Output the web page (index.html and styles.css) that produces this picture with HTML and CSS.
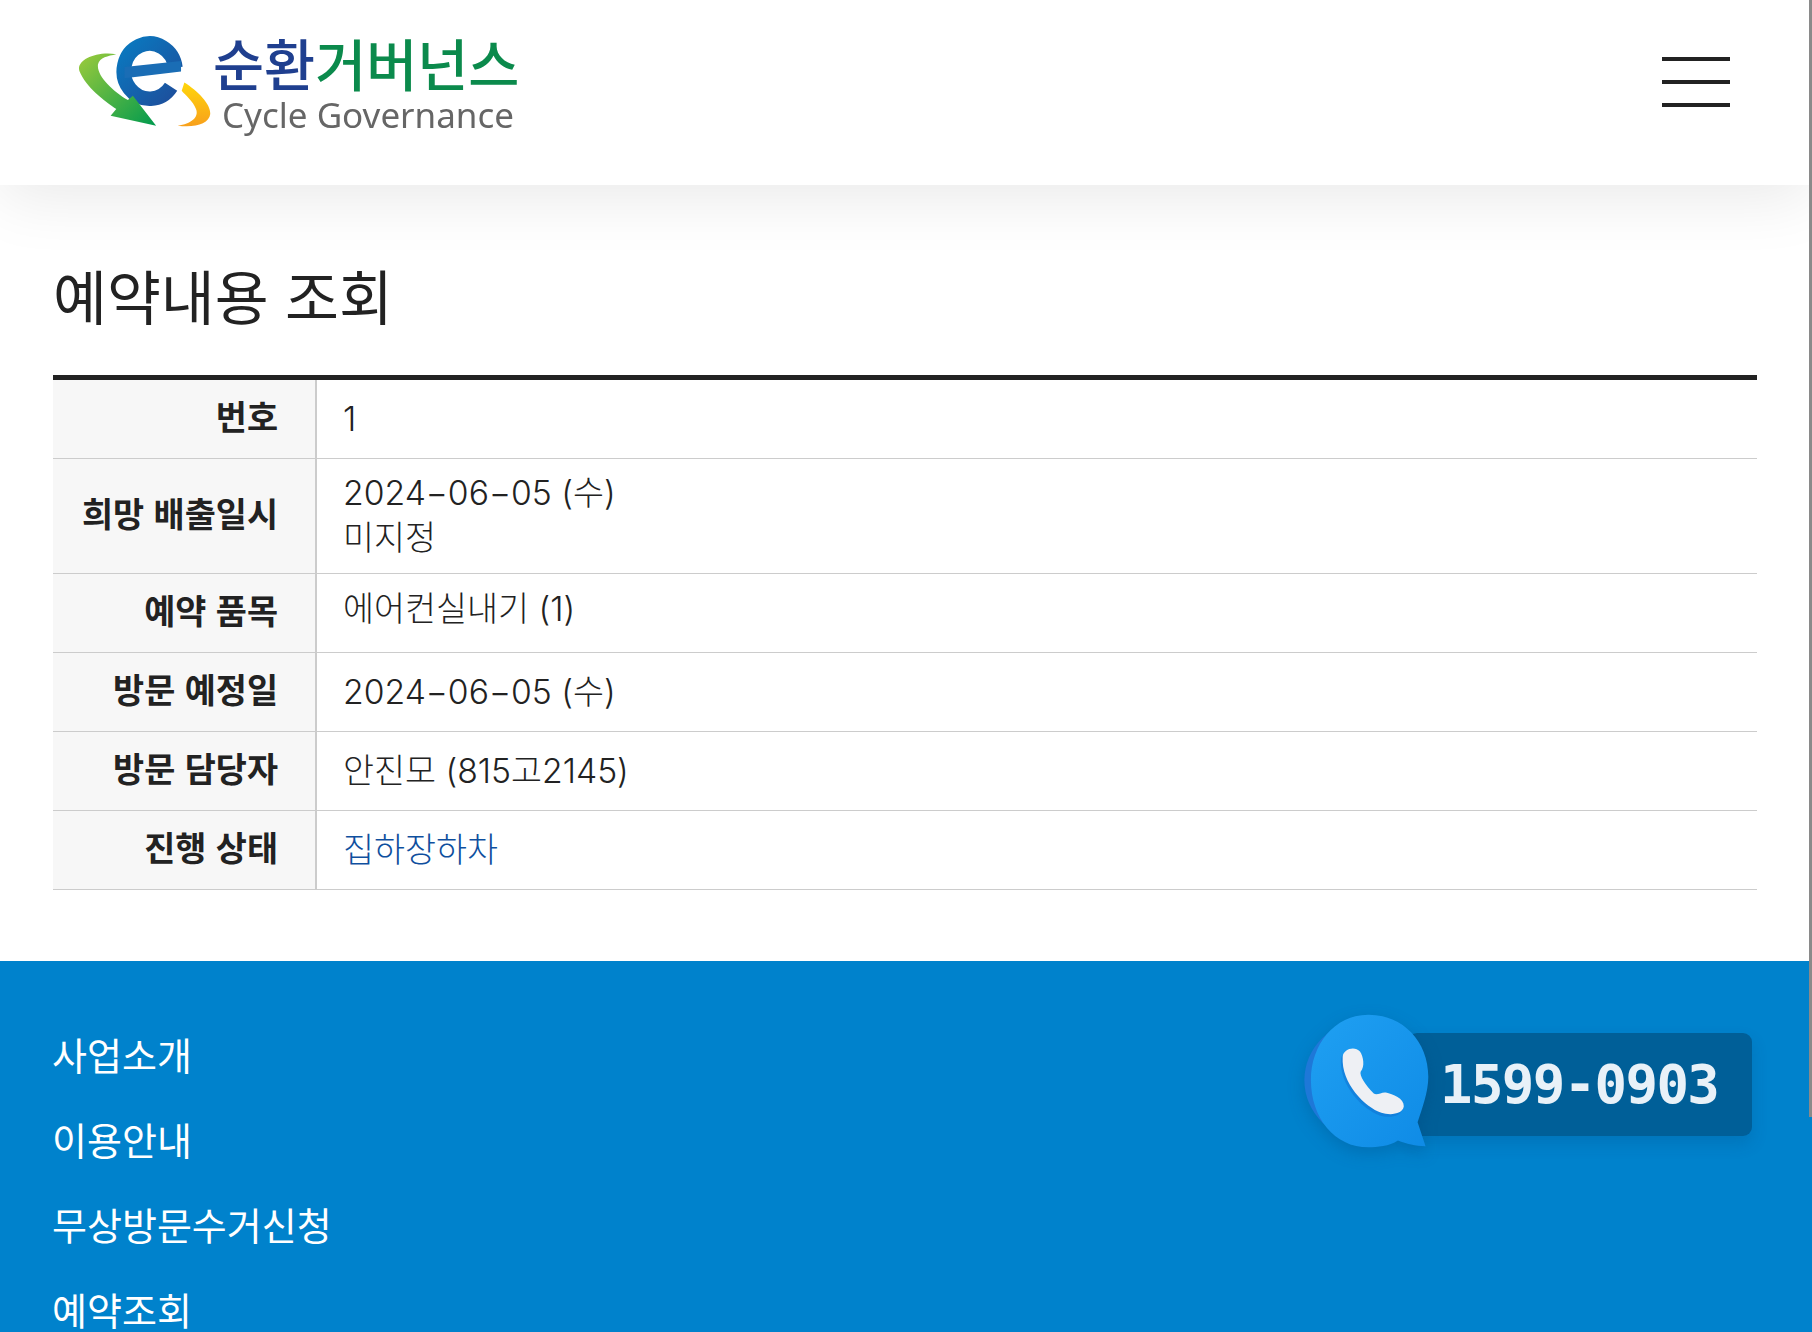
FILE: index.html
```html
<!DOCTYPE html>
<html lang="ko">
<head>
    <meta charset="UTF-8">
    <meta name="viewport" content="width=device-width, initial-scale=1.0">
    <title>예약내용 조회</title>
    <link rel="stylesheet" href="styles.css">
</head>
<body>
    <header class="site-header">
        <a class="logo" href="#">
            <svg class="logo-mark" viewBox="110 105 400 280" aria-hidden="true">
                <defs>
                    <linearGradient id="eBlue" x1="0" y1="0" x2="1" y2="1">
                        <stop offset="0" stop-color="#0a78bf"/>
                        <stop offset="1" stop-color="#1d4f9c"/>
                    </linearGradient>
                    <linearGradient id="arrowGreen" x1="0" y1="0" x2="1" y2="1">
                        <stop offset="0" stop-color="#9ccb3b"/>
                        <stop offset="1" stop-color="#009a4e"/>
                    </linearGradient>
                    <linearGradient id="arrowYellow" x1="0" y1="0" x2="0" y2="1">
                        <stop offset="0" stop-color="#ffd60a"/>
                        <stop offset="1" stop-color="#f8a01c"/>
                    </linearGradient>
                </defs>
                <path d="M390 258 A78 83 0 1 1 403 200" fill="none" stroke="url(#eBlue)" stroke-width="44"/>
                <path d="M250 198 L420 180 L420 212 L250 232 Z" fill="#1a6db5"/>
                <path d="M225 160 C160 150 104 180 114 210 C134 260 190 300 225 325 L208 345 L345 375 L275 285 L260 298 C215 270 165 225 170 190 C175 170 200 165 225 160 Z" fill="url(#arrowGreen)"/>
                <path d="M430 245 C470 270 510 310 508 340 C505 370 460 382 410 375 C450 370 475 350 465 325 C455 300 435 285 422 270 Z" fill="url(#arrowYellow)"/>
            </svg>
            <span class="logo-text">
                <span class="logo-ko"><span class="logo-navy">순환</span>거버넌스</span>
                <span class="logo-en">Cycle Governance</span>
            </span>
        </a>
        <button class="menu-btn" aria-label="menu">
            <span></span>
            <span></span>
            <span></span>
        </button>
    </header>

    <main class="content">
        <h1 class="page-title">예약내용 조회</h1>
        <table class="detail-table">
            <tr>
                <th>번호</th>
                <td>1</td>
            </tr>
            <tr>
                <th>희망 배출일시</th>
                <td>2024−06−05 (수)<br>미지정</td>
            </tr>
            <tr class="item-row">
                <th>예약 품목</th>
                <td>에어컨실내기 (1)</td>
            </tr>
            <tr>
                <th>방문 예정일</th>
                <td>2024−06−05 (수)</td>
            </tr>
            <tr>
                <th>방문 담당자</th>
                <td>안진모 (815고2145)</td>
            </tr>
            <tr>
                <th>진행 상태</th>
                <td class="status">집하장하차</td>
            </tr>
        </table>
    </main>

    <footer class="site-footer">
        <ul class="footer-menu">
            <li><a href="#">사업소개</a></li>
            <li><a href="#">이용안내</a></li>
            <li><a href="#">무상방문수거신청</a></li>
            <li><a href="#">예약조회</a></li>
        </ul>
        <div class="call-box">
            <svg class="call-icon" viewBox="95 65 365 405" preserveAspectRatio="none" aria-hidden="true">
                <defs>
                    <linearGradient id="bubble" x1="0" y1="0" x2="1" y2="1">
                        <stop offset="0" stop-color="#1fa0f2"/>
                        <stop offset="1" stop-color="#0f8be6"/>
                    </linearGradient>
                </defs>
                <circle cx="277" cy="265" r="178" fill="#1e78d8"/>
                <path d="M285 70 C385 70 458 150 458 255 C458 300 440 350 427 390 L450 462 C420 462 395 455 370 445 C345 462 310 465 285 465 C185 465 118 375 118 265 C118 160 185 70 285 70 Z" fill="url(#bubble)"/>
                <path d="M210 195 C212 172 245 162 260 180 C270 195 275 225 262 240 C258 250 275 280 300 305 C310 312 322 300 335 302 C355 306 388 320 387 343 C384 368 345 370 322 362 C275 345 205 275 210 195 Z" fill="#0f6fd0" opacity="0.5" transform="translate(-5 8)"/>
                <path d="M210 195 C212 172 245 162 260 180 C270 195 275 225 262 240 C258 250 275 280 300 305 C310 312 322 300 335 302 C355 306 388 320 387 343 C384 368 345 370 322 362 C275 345 205 275 210 195 Z" fill="#eef0f4"/>
            </svg>
            <strong class="call-number">1599-0903</strong>
        </div>
    </footer>

    <div class="scroll-thumb"></div>
</body>
</html>
```
FILE: styles.css
```css
* {
    margin: 0;
    padding: 0;
    box-sizing: border-box;
}

html, body {
    height: 1332px;
    overflow: hidden;
}

body {
    position: relative;
    background: #fff;
    color: #222;
    font-family: Inter, "Noto Sans CJK KR", "Noto Sans", sans-serif;
}

a {
    color: inherit;
    text-decoration: none;
}

.site-header {
    position: relative;
    display: flex;
    justify-content: space-between;
    align-items: flex-start;
    height: 185px;
    padding: 36px 82px 0 78px;
    background: #fff;
    box-shadow: 0 12px 60px rgba(0,0,0,0.09);
}

.logo {
    display: flex;
    align-items: flex-start;
}

.logo-mark {
    width: 133px;
    height: 93px;
    filter: blur(0.4px);
}

.logo-text {
    display: flex;
    flex-direction: column;
    margin-left: 2px;
    margin-top: -8px;
    filter: blur(0.4px);
}

.logo-ko {
    color: #0b8a4c;
    font-family: "Noto Sans CJK KR", sans-serif;
    font-size: 55.5px;
    font-weight: 500;
    line-height: 69px;
    white-space: nowrap;
}

.logo-navy {
    color: #1f3f8f;
}

.logo-en {
    color: #666;
    font-family: "Noto Sans", sans-serif;
    font-size: 35px;
    line-height: 36px;
    margin-left: 9px;
    white-space: nowrap;
}

.menu-btn {
    display: flex;
    flex-direction: column;
    gap: 19px;
    width: 68px;
    margin-top: 21px;
    border: none;
    background: none;
}

.menu-btn span {
    display: block;
    height: 4px;
    background: #222;
}

.content {
    padding: 69px 55px 71px 53px;
}

.page-title {
    font-family: "Noto Sans CJK KR", sans-serif;
    font-size: 58.6px;
    font-weight: 400;
    line-height: 82px;
    margin-bottom: 39px;
    color: #222;
}

.detail-table {
    width: 100%;
    border-collapse: collapse;
    border-top: 5px solid #222;
    font-size: 33.7px;
}

.detail-table tr {
    height: 79px;
    border-bottom: 1px solid #ccc;
}

.detail-table tr:first-child {
    height: 81px;
}

.detail-table th {
    width: 263px;
    padding-right: 37px;
    padding-bottom: 8px;
    background: #f7f7f7;
    border-right: 2px solid #ccc;
    text-align: right;
    font-family: "Noto Sans CJK KR", sans-serif;
    font-size: 33.8px;
    font-weight: 700;
    white-space: nowrap;
}

.detail-table td {
    padding: 11px 0 13px 26px;
    font-weight: 300;
    line-height: 45px;
}

.detail-table .item-row td {
    padding-bottom: 20px;
}

.detail-table .status {
    color: #0f4f9e;
}

.site-footer {
    display: flex;
    justify-content: space-between;
    align-items: flex-start;
    padding: 50px 60px 40px 53px;
    background: #0082cc;
    color: #fff;
}

.footer-menu {
    list-style: none;
    margin-left: -1px;
    font-family: "Noto Sans CJK KR", sans-serif;
    font-size: 38px;
    font-weight: 400;
    line-height: 85px;
}

.call-box {
    position: relative;
    margin-left: auto;
    margin-top: 22px;
    width: 344px;
    height: 103px;
    padding-left: 32px;
    display: flex;
    align-items: center;
    background: #005f98;
    border-radius: 9px;
    box-shadow: 0 8px 16px rgba(0,60,110,0.18);
}

.call-icon {
    position: absolute;
    left: -105px;
    top: -20px;
    width: 126px;
    height: 136px;
    filter: drop-shadow(0 6px 8px rgba(0,60,110,0.25));
}

.call-number {
    color: #e8f1f8;
    font-family: "DejaVu Sans Mono", monospace;
    font-size: 54px;
    font-weight: 700;
    letter-spacing: -1.6px;
    white-space: nowrap;
}

.scroll-thumb {
    position: absolute;
    top: 0;
    right: 0;
    width: 3px;
    height: 1117px;
    background: #8a8a8a;
}
```
